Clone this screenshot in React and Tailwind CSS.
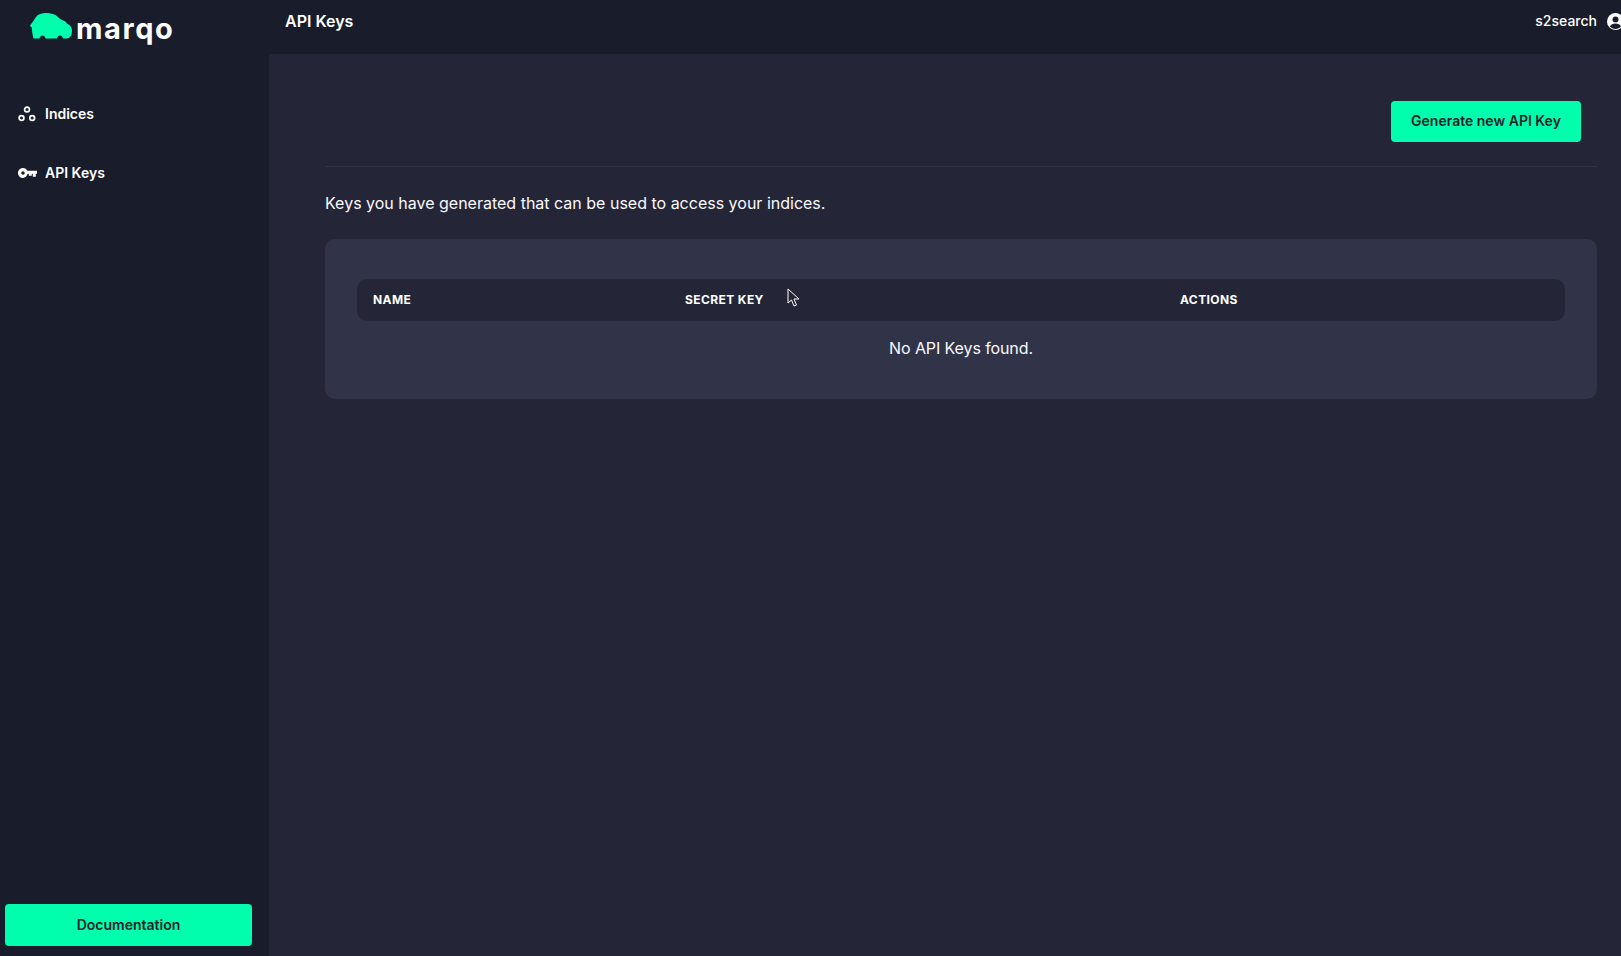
import React from "react";

const Logo = () => (
  <svg width="44" height="27" viewBox="0 0 44 27" className="shrink-0">
    <path fill="#00ffac" d="M1 12.500 C3 10 5 7 7 4 C9 1 13 0 17 0 C22 0 26 1 29 4 C30 5 31 6 33 7 C36 8 37.500 9.500 38.500 11 C41.500 12 43 15 43 18 C43 22 41 25.500 37 25.500 L34 25.500 C33.500 23.500 32.500 22.500 31 22.500 C29.500 22.500 28.500 23.500 28 25.500 L16.500 25.500 C16 23.500 15 22.500 13.500 22.500 C12 22.500 11 23.500 10.500 25.500 L4.500 25.500 C3.500 22 3 18 2.700 14.500 C2 14 1.200 13.300 1 12.500 Z" />
  </svg>
);

const Cursor = () => (
  <svg width="14" height="20" viewBox="0 0 14 20" className="absolute left-[787px] top-[288px]">
    <path d="M1 1 L1 15 L4.500 12 L7 18 L9.500 17 L7 11 L12 11 Z" fill="#242638" stroke="#ffffff" strokeWidth="1" />
  </svg>
);

const IndicesIcon = () => (
  <svg width="18" height="16" viewBox="0 0 18 16" fill="none" stroke="#ffffff" strokeWidth="1.7">
    <circle cx="9" cy="3.500" r="2.400" />
    <circle cx="3.500" cy="12" r="2.400" />
    <circle cx="14.200" cy="12" r="2.400" />
  </svg>
);

const KeyIcon = () => (
  <svg width="19" height="10" viewBox="0 0 19 10">
    <path fill="#ffffff" fillRule="evenodd" d="M5 0 C7 0 8.700 1.200 9.500 2.800 L19 2.800 L19 5.800 L17.800 5.800 L17.800 8.800 L14.800 8.800 L14.800 5.800 L13.800 5.800 L13.800 7.800 L10.800 7.800 L10.800 5.800 L9.700 5.800 C9 8 7.200 10 5 10 C2.200 10 0 7.800 0 5 C0 2.200 2.200 0 5 0 Z M5 3.300 C4 3.300 3.300 4 3.300 5 C3.300 6 4 6.700 5 6.700 C6 6.700 6.700 6 6.700 5 C6.700 4 6 3.300 5 3.300 Z" />
  </svg>
);

const UserIcon = () => (
  <svg width="17" height="17" viewBox="0 0 16 16" className="shrink-0">
    <circle cx="8" cy="8" r="8" fill="#ffffff" />
    <circle cx="8" cy="6" r="2.800" fill="#191c2b" />
    <path d="M2.800 12.600 C3.800 10.500 5.500 9.800 8 9.800 C10.500 9.800 12.200 10.500 13.200 12.600 C12 14 10 15 8 15 C6 15 4 14 2.800 12.600 Z" fill="#191c2b" />
  </svg>
);

export default function App() {
  return (
    <div className="relative flex h-[956px] w-full overflow-hidden bg-[#242638] font-['Inter',sans-serif] text-white">
      <aside className="flex w-[269px] shrink-0 flex-col bg-[#191c2b]">
        <div className="flex h-[54px] items-start gap-[3px] pl-[29px] pt-[13px]">
          <Logo />
          <span className="mt-[-1px] text-[29px] font-bold leading-[34px] tracking-[1.6px]">marqo</span>
        </div>
        <nav className="mt-[49px] flex flex-col gap-[39px] pl-[18px]">
          <div className="flex h-[20px] items-center text-[14px] font-semibold">
            <span className="flex w-[27px] items-center pt-[2px]"><IndicesIcon /></span>
            Indices
          </div>
          <div className="flex h-[20px] items-center text-[14px] font-semibold">
            <span className="flex w-[27px] items-center pt-[2px]"><KeyIcon /></span>
            API Keys
          </div>
        </nav>
        <div className="mt-auto px-[5px] pb-[10px]">
          <button className="h-[42px] w-[247px] rounded-[4px] bg-[#00ffac] pb-[2px] text-[14px] font-semibold text-[#191c2b]">Documentation</button>
        </div>
      </aside>
      <div className="flex min-w-0 flex-1 flex-col">
        <header className="flex h-[54px] shrink-0 items-start justify-between overflow-hidden bg-[#191c2b] pl-[16px] pt-[10px]">
          <h1 className="text-[16px] font-semibold leading-[22px]">API Keys</h1>
          <div className="mr-[-1px] flex items-center gap-[10px]">
            <span className="text-[14px] font-medium leading-[22px]">s2search</span>
            <span className="w-[15px] overflow-hidden"><UserIcon /></span>
          </div>
        </header>
        <main className="pl-[56px] pr-[24px]">
          <div className="flex h-[113px] justify-end border-b border-[#2f3444] pr-[16px] pt-[47px]">
            <button className="h-[41px] w-[190px] rounded-[4px] bg-[#00ffac] pb-[3px] text-[14px] font-semibold text-[#191c2b]">Generate new API Key</button>
          </div>
          <p className="mt-[24px] text-[16px] leading-[24px] text-[#f9fafb]">Keys you have generated that can be used to access your indices.</p>
          <section className="mt-[24px] h-[160px] rounded-[10px] bg-[#313349] px-[32px] pt-[40px]">
            <div className="grid h-[42px] grid-cols-[312px_495px_1fr] items-center rounded-[10px] bg-[#242638] pl-[16px] text-[12px] font-bold tracking-[0.4px]">
              <span>NAME</span>
              <span>SECRET KEY</span>
              <span>ACTIONS</span>
            </div>
            <p className="mt-[15px] text-center text-[16px] leading-[24px] tracking-[-0.1px] text-[#f9fafb]">No API Keys found.</p>
          </section>
        </main>
      </div>
      <Cursor />
    </div>
  );
}
